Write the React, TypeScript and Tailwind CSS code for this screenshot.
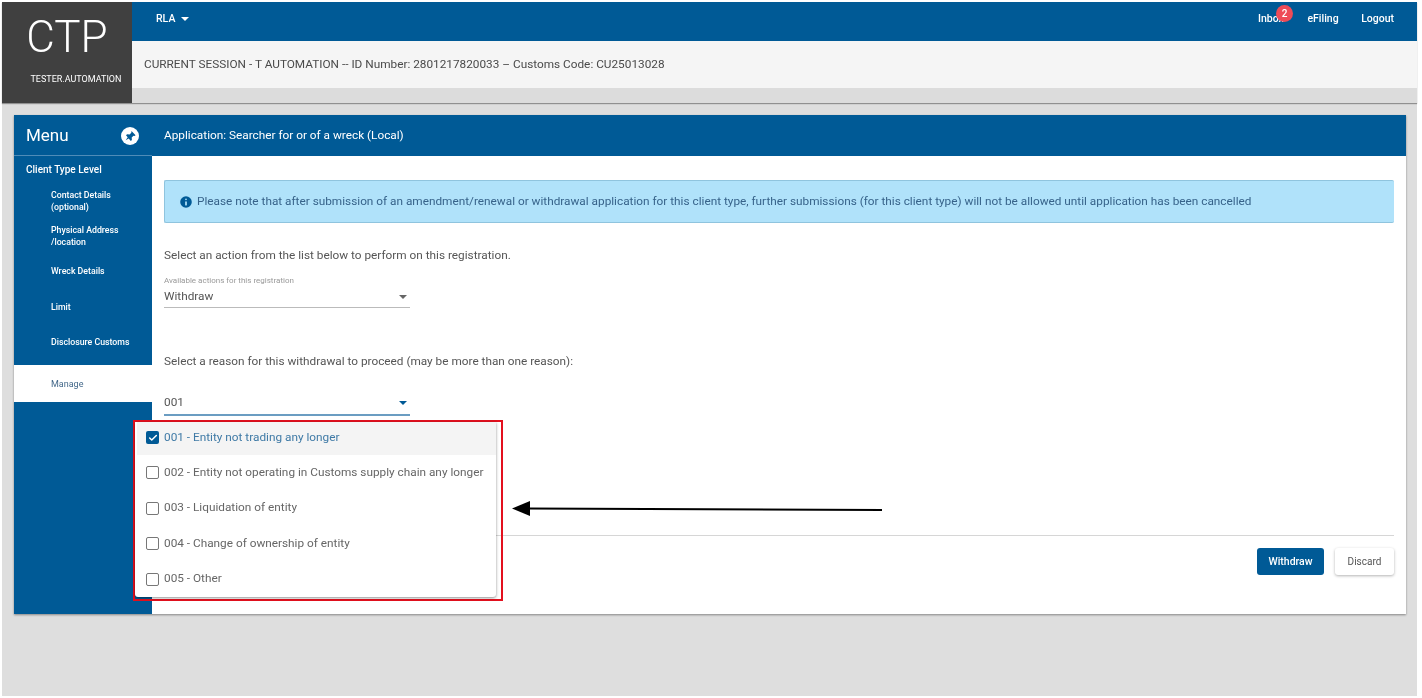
import { Check, Info } from "lucide-react";

const navItems = [
  { label: ["Contact Details", "(optional)"] },
  { label: ["Physical Address", "/location"] },
  { label: ["Wreck Details"] },
  { label: ["Limit"] },
  { label: ["Disclosure Customs"] },
];

const reasons = [
  "001 - Entity not trading any longer",
  "002 - Entity not operating in Customs supply chain any longer",
  "003 - Liquidation of entity",
  "004 - Change of ownership of entity",
  "005 - Other",
];

function Caret({ className }: { className: string }) {
  return <span className={`h-0 w-0 border-x-[4px] border-t-[4px] border-x-transparent ${className}`} />;
}

function PinBadge() {
  return (
    <svg viewBox="0 0 18 18" className="h-[18px] w-[18px]">
      <circle cx="9" cy="9" r="9" fill="#fff" />
      <path d="M10.5 4 14.6 8.2l-1.2.7-.9-.2-1.8 1.7.2 2.6-1.1.9-2.1-2.3-3 1.6 2-2.9L5 8.2l1.1-.9 2.5.3 1.7-1.8z" fill="#005a96" />
    </svg>
  );
}

export default function App() {
  return (
    <div className="h-[698px] w-[1422px] overflow-hidden bg-white pb-[2px] pl-[2px] pr-[5px] pt-[2px] font-['Roboto',sans-serif] blur-[0.35px]">
      <div className="relative flex h-full flex-col bg-[#dedede]">
        <header className="flex h-[101px] shrink-0 shadow-[0_1px_1px_rgba(0,0,0,0.35)]">
          <div className="flex w-[130px] shrink-0 flex-col items-center bg-[#404040] text-white">
            <div className="mt-[11px] text-[44px] font-light leading-[48px]">CTP</div>
            <div className="mt-[12px] pl-[18px] text-[9px] leading-[12px]">TESTER.AUTOMATION</div>
          </div>
          <div className="flex min-w-0 flex-1 flex-col">
            <div className="flex h-[39px] items-center justify-between bg-[#005a96] pb-[6px] pl-[24px] pr-[23px] text-[10.5px] font-medium text-white">
              <div className="flex items-center gap-[6px]">
                RLA
                <Caret className="border-t-white" />
              </div>
              <div className="flex items-center gap-[22.5px]">
                <div className="relative mr-[1px]">
                  Inbox
                  <span className="absolute -top-[6px] left-[18px] flex h-[17px] w-[17px] items-center justify-center rounded-full bg-[#ee4b57] text-[10px] text-white">
                    2
                  </span>
                </div>
                <span>eFiling</span>
                <span>Logout</span>
              </div>
            </div>
            <div className="flex h-[47px] items-center bg-[#f5f5f5] pl-[12px] text-[11.8px] text-[#4a4a4a]">
              CURRENT SESSION - T AUTOMATION -- ID Number: 2801217820033 – Customs Code: CU25013028
            </div>
            <div className="flex-1 bg-[#dcdcdc]" />
          </div>
        </header>

        <div className="ml-[12px] mr-[11px] mt-[12px] flex h-[499px] shadow-[0_1px_2px_rgba(0,0,0,0.4)]">
          <aside className="flex w-[138px] shrink-0 flex-col bg-[#005a96] text-white">
            <div className="flex h-[41px] items-center justify-between border-b border-[#4f8cb8] pl-[12px] pr-[13px] pt-[1px]">
              <span className="text-[17px] leading-none">Menu</span>
              <PinBadge />
            </div>
            <div className="pl-[12px] pt-[8px] text-[10px] font-medium leading-[12px]">Client Type Level</div>
            <nav className="mt-[7px]">
              {navItems.map((item) => (
                <div key={item.label[0]} className="flex h-[35.4px] flex-col justify-center pl-[37px] text-[8.75px] font-medium leading-[12px]">
                  {item.label.map((line) => (
                    <span key={line}>{line}</span>
                  ))}
                </div>
              ))}
            </nav>
            <div className="mt-[5px] flex h-[37px] items-center bg-white pl-[37px] pt-[2px] text-[9px] text-[#44698a]">Manage</div>
          </aside>

          <main className="relative flex min-w-0 flex-1 flex-col bg-white">
            <div className="flex h-[41px] shrink-0 items-center bg-[#005a96] pl-[12px] pt-[1px] text-[11.8px] text-white">
              Application: Searcher for or of a wreck (Local)
            </div>
            <div className="flex flex-1 flex-col pl-[12px] pr-[12px] pt-[24px] text-[11.8px] text-[#555]">
              <div className="flex h-[43px] items-center gap-[3px] rounded-[2px] border-b border-l border-t border-[#8fc4de] bg-[#b0e2fa] pl-[13px] text-[#37638a]">
                <Info className="h-[16px] w-[16px] fill-[#005a96] text-[#b0e2fa]" strokeWidth={2.6} />
                Please note that after submission of an amendment/renewal or withdrawal application for this client type, further submissions (for this client type) will not be allowed until application has been cancelled
              </div>

              <p className="mt-[25px] leading-[14px]">Select an action from the list below to perform on this registration.</p>
              <div className="mt-[14px] w-[246px] border-b border-[#bbb]">
                <div className="text-[8px] leading-[10px] text-[#999]">Available actions for this registration</div>
                <div className="flex h-[21px] items-center justify-between pr-[3px] pt-[1px]">
                  Withdraw
                  <Caret className="border-t-[#666]" />
                </div>
              </div>

              <p className="mt-[46px] leading-[14px]">Select a reason for this withdrawal to proceed (may be more than one reason):</p>
              <div className="mt-[26px] flex h-[22px] w-[246px] items-center justify-between border-b-2 border-[#6b9dc2] pb-[3px] pr-[3px]">
                001
                <Caret className="border-t-[#005a96]" />
              </div>

              <div className="mt-auto flex h-[79px] items-start justify-end gap-[11px] border-t border-[#d6d6d6] pt-[12px]">
                <button className="h-[27px] w-[67px] rounded-[3px] bg-[#005a96] text-[10.5px] font-medium text-white">Withdraw</button>
                <button className="h-[27px] w-[59px] rounded-[3px] bg-white text-[10px] text-[#555] shadow-[0_1px_3px_rgba(0,0,0,0.3)]">Discard</button>
              </div>
            </div>
          </main>
        </div>

        {/* dropdown and its annotation lie over the page */}
        <div className="absolute left-[131px] top-[418px] h-[181px] w-[370px] border-2 border-[#e3101e]">
          <div className="flex h-[175px] w-[361px] flex-col gap-[2.4px] rounded-b-[3px] bg-white shadow-[0_1px_3px_rgba(0,0,0,0.45)]">
            {reasons.map((reason, i) => (
              <div key={reason} className={`ml-[2px] flex h-[33px] shrink-0 items-center gap-[5px] pb-[2px] pl-[9px] text-[11.8px] ${i === 0 ? "bg-[#f4f4f4] text-[#3f7aa6]" : "text-[#666]"}`}>
                {i === 0 ? (
                  <span className="flex h-[13px] w-[13px] items-center justify-center rounded-[2px] bg-[#005a96]">
                    <Check className="h-[10px] w-[10px] text-white" strokeWidth={3.5} />
                  </span>
                ) : (
                  <span className="h-[13px] w-[13px] rounded-[2px] border-[1.5px] border-[#777]" />
                )}
                {reason}
              </div>
            ))}
          </div>
        </div>
        <svg className="absolute left-[510px] top-[497px]" width="372" height="20" viewBox="0 0 372 20">
          <path d="M15 9.4 370 11" stroke="#000" strokeWidth="2" />
          <path d="M0 9.5 18 2v15z" fill="#000" />
        </svg>
      </div>
    </div>
  );
}
